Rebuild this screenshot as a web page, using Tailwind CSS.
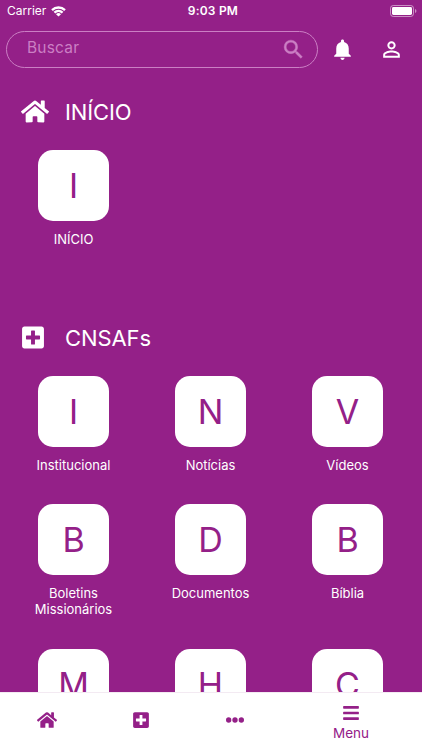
<!DOCTYPE html>
<html lang="pt-BR">
<head>
    <meta charset="UTF-8">
    <meta name="viewport" content="width=device-width, initial-scale=1.0">
    <title>CNSAFs</title>
    <script src="https://cdn.jsdelivr.net/npm/@tailwindcss/browser@4"></script>
</head>
<body class="bg-[#942088] text-white font-['Inter',sans-serif] antialiased">

    <!-- Shared icon shapes -->
    <svg class="hidden">
        <symbol id="home" viewBox="0 0 576 512"><path d="M280.37 148.26L96 300.11V464a16 16 0 0 0 16 16l112.06-.29a16 16 0 0 0 15.92-16V368a16 16 0 0 1 16-16h64a16 16 0 0 1 16 16v95.64a16 16 0 0 0 16 16.05L464 480a16 16 0 0 0 16-16V300L295.67 148.26a12.19 12.19 0 0 0-15.3 0zM571.6 251.47L488 182.56V44.05a12 12 0 0 0-12-12h-56a12 12 0 0 0-12 12v72.61L318.47 43a48 48 0 0 0-61 0L4.34 251.47a12 12 0 0 0-1.6 16.9l25.5 31A12 12 0 0 0 45.15 301l235.22-193.74a12.19 12.19 0 0 1 15.3 0L530.9 301a12 12 0 0 0 16.9-1.6l25.5-31a12 12 0 0 0-1.7-16.93z"/></symbol>
        <symbol id="plus" viewBox="0 0 448 512"><path d="M400 32H48C21.5 32 0 53.5 0 80v352c0 26.5 21.5 48 48 48h352c26.5 0 48-21.5 48-48V80c0-26.5-21.5-48-48-48zm-32 252c0 6.6-5.4 12-12 12h-92v92c0 6.6-5.4 12-12 12h-56c-6.6 0-12-5.4-12-12v-92H92c-6.6 0-12-5.4-12-12v-56c0-6.6 5.4-12 12-12h92v-92c0-6.6 5.4-12 12-12h56c6.6 0 12 5.4 12 12v92h92c6.6 0 12 5.4 12 12v56z"/></symbol>
    </svg>

    <div class="flex flex-col h-[750px] w-[422px] overflow-hidden">

        <!-- Status bar -->
        <div class="grid grid-cols-3 items-center h-[22px] shrink-0 pl-[7px] pr-[5px] text-[12px] leading-none">
            <div class="flex items-center gap-[5px]">
                <span>Carrier</span>
                <svg class="w-[15px] h-[11px]" viewBox="0 0 15 11" fill="none" stroke="currentColor" stroke-width="2.3">
                    <path d="M1 4.1a9.4 9.4 0 0 1 13 0M3.4 6.6a6 6 0 0 1 8.2 0"/>
                    <path d="M7.5 10.6L5 8.2a3.6 3.6 0 0 1 5 0z" fill="currentColor" stroke="none"/>
                </svg>
            </div>
            <span class="text-center font-semibold pl-[2px] tracking-[0.2px]">9:03 PM</span>
            <svg class="justify-self-end w-[27px] h-[12px]" viewBox="0 0 27 12">
                <rect x=".5" y=".5" width="23" height="11" rx="2.8" fill="none" stroke="#fff" stroke-opacity=".5"/>
                <rect x="2" y="2" width="20" height="8" rx="1.4" fill="#fff"/>
                <path d="M25 4v4a2.1 2.1 0 0 0 0-4z" fill="#fff" fill-opacity=".5"/>
            </svg>
        </div>

        <!-- Search -->
        <header class="flex items-center shrink-0 mt-[9px] pl-[6px] h-[37px]">
            <div class="flex items-center justify-between w-[312px] h-[37px] rounded-full border border-[#cb7fc4] pl-5 pr-[11px] text-[#cb7fc4]">
                <span class="text-[15.5px] leading-5 -mt-[3px] tracking-[0.2px]">Buscar</span>
                <svg class="size-[25px]" viewBox="0 0 24 24" fill="currentColor" stroke="currentColor" stroke-width=".4"><path d="M15.5 14h-.79l-.28-.27A6.47 6.47 0 0 0 16 9.5 6.5 6.5 0 1 0 9.5 16c1.61 0 3.09-.59 4.23-1.57l.27.28v.79l5 4.99L20.49 19l-4.99-5zm-6 0C7.01 14 5 11.99 5 9.5S7.01 5 9.5 5 14 7.01 14 9.5 11.99 14 9.5 14z"/></svg>
            </div>
            <svg class="size-[25px] ml-3" viewBox="0 0 24 24" fill="currentColor"><path d="M12 22c1.1 0 2-.9 2-2h-4c0 1.1.89 2 2 2zm6-6v-5c0-3.07-1.64-5.64-4.5-6.32V4c0-.83-.67-1.5-1.5-1.5s-1.5.67-1.5 1.5v.68C7.63 5.36 6 7.92 6 11v5l-2 2v1h16v-1l-2-2z"/></svg>
            <svg class="size-[25px] ml-6" viewBox="0 0 24 24" fill="currentColor"><path d="M12 5.9a2.1 2.1 0 1 1 0 4.2 2.1 2.1 0 0 1 0-4.2m0 9c2.97 0 6.1 1.46 6.1 2.1v1.1H5.9V17c0-.64 3.13-2.1 6.1-2.1M12 4C9.79 4 8 5.79 8 8s1.79 4 4 4 4-1.79 4-4-1.79-4-4-4zm0 9c-2.67 0-8 1.34-8 4v3h16v-3c0-2.66-5.33-4-8-4z"/></svg>
        </header>

        <main class="flex-1 min-h-0 overflow-hidden">
            <section class="h-[226px] pt-[29px]">
                <div class="flex items-center h-7 pl-[20.5px]">
                    <svg class="w-[28px] h-[25px]" fill="currentColor"><use href="#home"/></svg>
                    <h2 class="ml-[16.5px] pt-[2px] text-[22px] font-normal tracking-[-0.1px]">INÍCIO</h2>
                </div>
                <div class="grid grid-cols-[repeat(3,137px)] mt-[25px] pl-[5px]">
                    <div class="flex flex-col items-center gap-[10px]">
                        <div class="flex items-center justify-center size-[71px] rounded-[15px] bg-white text-[#942088] text-[34px] font-normal">I</div>
                        <p class="text-[13px] leading-4 text-center">INÍCIO</p>
                    </div>
                </div>
            </section>

            <section class="pt-[29px]">
                <div class="flex items-center h-7 pl-[22px]">
                    <svg class="w-[22px] h-[25px]" fill="currentColor"><use href="#plus"/></svg>
                    <h2 class="ml-[21px] pt-[2px] text-[22px] font-normal tracking-[-0.1px]">CNSAFs</h2>
                </div>
                <div class="grid grid-cols-[repeat(3,137px)] gap-y-[31px] mt-[25px] pl-[5px]">
                    <div class="flex flex-col items-center gap-[10px]">
                        <div class="flex items-center justify-center size-[71px] rounded-[15px] bg-white text-[#942088] text-[34px] font-normal">I</div>
                        <p class="text-[13px] leading-4 text-center">Institucional</p>
                    </div>
                    <div class="flex flex-col items-center gap-[10px]">
                        <div class="flex items-center justify-center size-[71px] rounded-[15px] bg-white text-[#942088] text-[34px] font-normal">N</div>
                        <p class="text-[13px] leading-4 text-center">Notícias</p>
                    </div>
                    <div class="flex flex-col items-center gap-[10px]">
                        <div class="flex items-center justify-center size-[71px] rounded-[15px] bg-white text-[#942088] text-[34px] font-normal">V</div>
                        <p class="text-[13px] leading-4 text-center">Vídeos</p>
                    </div>
                    <div class="flex flex-col items-center gap-[10px]">
                        <div class="flex items-center justify-center size-[71px] rounded-[15px] bg-white text-[#942088] text-[34px] font-normal">B</div>
                        <p class="pb-px text-[13px] leading-4 text-center">Boletins<br>Missionários</p>
                    </div>
                    <div class="flex flex-col items-center gap-[10px]">
                        <div class="flex items-center justify-center size-[71px] rounded-[15px] bg-white text-[#942088] text-[34px] font-normal">D</div>
                        <p class="text-[13px] leading-4 text-center">Documentos</p>
                    </div>
                    <div class="flex flex-col items-center gap-[10px]">
                        <div class="flex items-center justify-center size-[71px] rounded-[15px] bg-white text-[#942088] text-[34px] font-normal">B</div>
                        <p class="text-[13px] leading-4 text-center">Bíblia</p>
                    </div>
                    <div class="flex flex-col items-center">
                        <div class="flex items-center justify-center size-[71px] rounded-[15px] bg-white text-[#942088] text-[34px] font-normal">M</div>
                    </div>
                    <div class="flex flex-col items-center">
                        <div class="flex items-center justify-center size-[71px] rounded-[15px] bg-white text-[#942088] text-[34px] font-normal">H</div>
                    </div>
                    <div class="flex flex-col items-center">
                        <div class="flex items-center justify-center size-[71px] rounded-[15px] bg-white text-[#942088] text-[34px] font-normal">C</div>
                    </div>
                </div>
            </section>
        </main>

        <!-- Bottom tabs -->
        <nav class="grid grid-cols-[94px_94px_94px_138px] justify-items-center items-center h-[58px] shrink-0 pb-[3px] bg-white border-t border-[#f3eaf2] text-[#942088]">
            <svg class="w-[20px] h-[18px]" fill="currentColor"><use href="#home"/></svg>
            <svg class="w-[16px] h-[18px]" fill="currentColor"><use href="#plus"/></svg>
            <svg class="size-[18px]" viewBox="0 0 512 512" fill="currentColor"><circle cx="76" cy="256" r="76"/><circle cx="256" cy="256" r="76"/><circle cx="436" cy="256" r="76"/></svg>
            <div class="flex flex-col items-center pt-[5px]">
                <svg class="w-4 h-[18px]" viewBox="0 0 448 512" fill="currentColor"><path d="M16 132h416c8.8 0 16-7.2 16-16V76c0-8.8-7.2-16-16-16H16C7.2 60 0 67.2 0 76v40c0 8.8 7.2 16 16 16zm0 160h416c8.8 0 16-7.2 16-16v-40c0-8.8-7.2-16-16-16H16c-8.8 0-16 7.2-16 16v40c0 8.8 7.2 16 16 16zm0 160h416c8.8 0 16-7.2 16-16v-40c0-8.8-7.2-16-16-16H16c-8.8 0-16 7.2-16 16v40c0 8.8 7.2 16 16 16z"/></svg>
                <span class="mt-[3px] text-[13.5px] leading-4">Menu</span>
            </div>
        </nav>
    </div>
</body>
</html>
